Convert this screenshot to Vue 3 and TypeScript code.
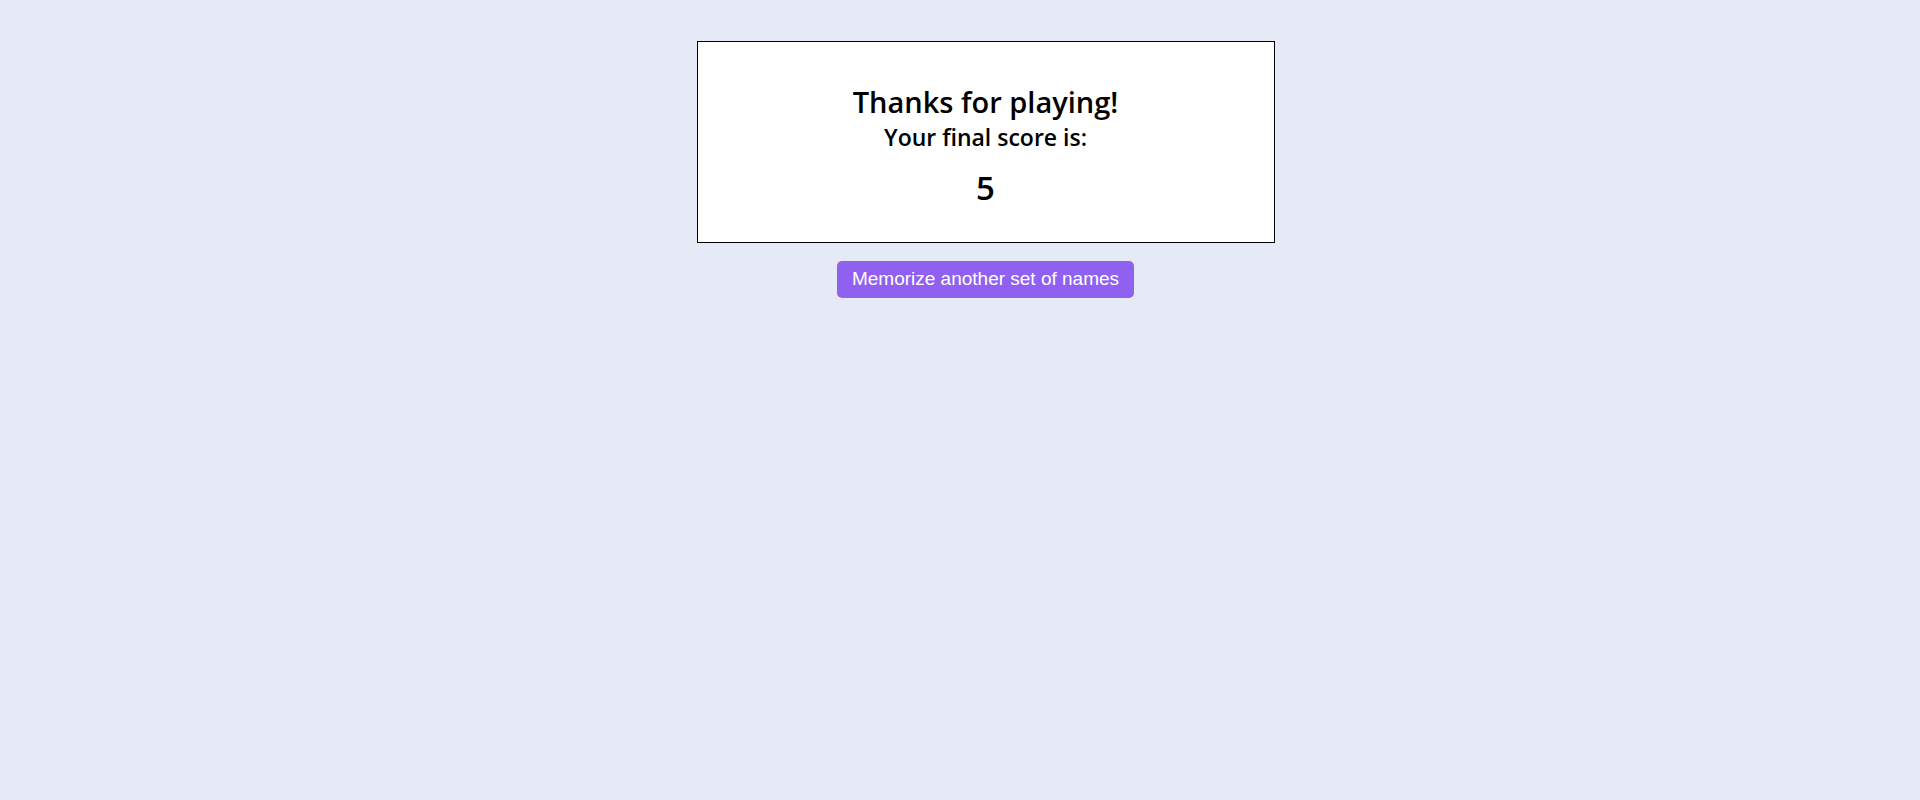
<script setup lang="ts">
import { ref } from 'vue'

const score = ref<number>(5)

function restart(): void {
  score.value = 0
}
</script>

<template>
  <main class="page">
    <section class="result">
      <h1 class="title">Thanks for playing!</h1>
      <h2 class="subtitle">Your final score is:</h2>
      <p class="score">{{ score }}</p>
    </section>
    <button class="again" type="button" @click="restart">Memorize another set of names</button>
  </main>
</template>

<style>
body {
  margin: 0;
  background: #e6e9f6;
}
</style>

<style scoped>
.page {
  display: flex;
  flex-direction: column;
  align-items: center;
  gap: 18px;
  padding: 41px 0 40px 51px;
  font-family: "Trebuchet MS", "Open Sans", "Noto Sans", sans-serif;
  color: #000;
}

.result {
  width: 30vw;
  min-width: 300px;
  padding: 40px 0 34px;
  border: 1px solid #000;
  background: #fff;
  text-align: center;
}

.title,
.subtitle,
.score {
  margin: 0;
  font-weight: 600;
}

.title {
  font-size: 29px;
  line-height: 40px;
}

.subtitle {
  font-size: 23px;
  line-height: 30px;
}

.score {
  margin-top: 16px;
  font-size: 33px;
  line-height: 40px;
}

.again {
  padding: 7px 15px 9px;
  border: 0;
  border-radius: 5px;
  background: #9060f0;
  color: #fff;
  font-family: Arial, "Liberation Sans", sans-serif;
  font-size: 19px;
  line-height: 21px;
  cursor: pointer;
}
</style>
